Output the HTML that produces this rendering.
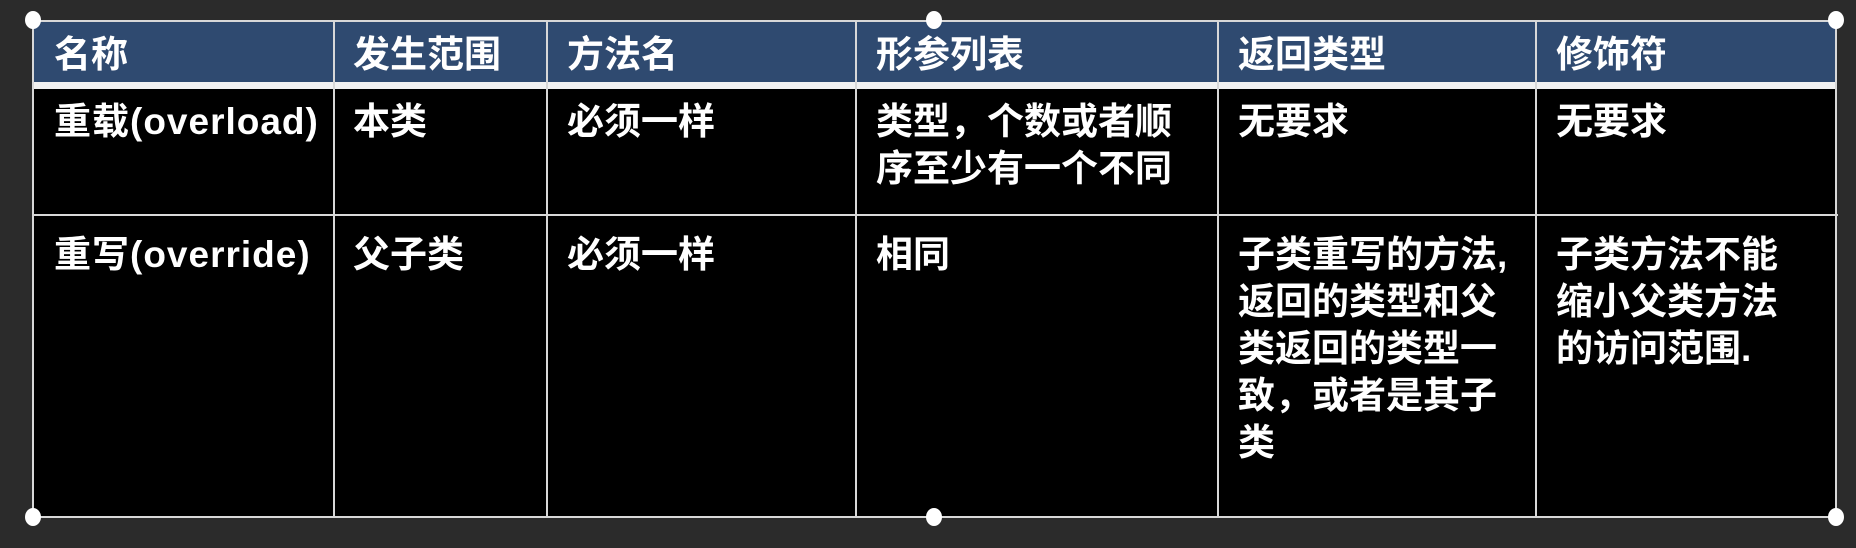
<!DOCTYPE html>
<html><head><meta charset="utf-8"><style>
body{margin:0;width:1856px;height:548px;background:#2b2b2b;overflow:hidden;position:relative;font-family:"Liberation Sans","Noto Sans CJK SC",sans-serif;font-weight:bold;color:#fff}
.hdr{position:absolute;left:33px;top:22px;width:1803px;height:61px;background:#2f4a70}
.body{position:absolute;left:33px;top:89px;width:1803px;height:428px;background:#000}
.wl{position:absolute;left:33px;top:82px;width:1803px;height:7px;background:#f2f2f2}
.v{position:absolute;width:2px;background:#d8d8d8;top:20px;height:498px}
.h{position:absolute;height:2px;background:#d8d8d8;left:33px;width:1805px}
.t{position:absolute;font-size:37px;line-height:47px;white-space:nowrap}
.d{position:absolute;width:16px;height:18px;border-radius:50%;background:#fff;margin:-9px 0 0 -8px}
</style></head><body>
<div class="hdr"></div><div class="body"></div><div class="wl"></div>
<div class="h" style="top:20px"></div>
<div class="h" style="top:214px"></div>
<div class="h" style="top:516px"></div>
<div class="v" style="left:32px"></div>
<div class="v" style="left:333px"></div>
<div class="v" style="left:546px"></div>
<div class="v" style="left:855px"></div>
<div class="v" style="left:1217px"></div>
<div class="v" style="left:1535px"></div>
<div class="v" style="left:1835px"></div>
<div class="t" style="left:54px;top:31px">名称</div>
<div class="t" style="left:353px;top:31px">发生范围</div>
<div class="t" style="left:567px;top:31px">方法名</div>
<div class="t" style="left:876px;top:31px">形参列表</div>
<div class="t" style="left:1238px;top:31px">返回类型</div>
<div class="t" style="left:1556px;top:31px">修饰符</div>
<div class="t" style="left:54px;top:98px;letter-spacing:1px">重载(overload)</div>
<div class="t" style="left:353px;top:98px">本类</div>
<div class="t" style="left:567px;top:98px">必须一样</div>
<div class="t" style="left:876px;top:98px">类型，个数或者顺<br>序至少有一个不同</div>
<div class="t" style="left:1238px;top:98px">无要求</div>
<div class="t" style="left:1556px;top:98px">无要求</div>
<div class="t" style="left:54px;top:231px;letter-spacing:1px">重写(override)</div>
<div class="t" style="left:353px;top:231px">父子类</div>
<div class="t" style="left:567px;top:231px">必须一样</div>
<div class="t" style="left:876px;top:231px">相同</div>
<div class="t" style="left:1238px;top:231px">子类重写的方法,<br>返回的类型和父<br>类返回的类型一<br>致，或者是其子<br>类</div>
<div class="t" style="left:1556px;top:231px">子类方法不能<br>缩小父类方法<br>的访问范围.</div>
<div class="d" style="left:33px;top:20px"></div>
<div class="d" style="left:934px;top:20px"></div>
<div class="d" style="left:1836px;top:20px"></div>
<div class="d" style="left:33px;top:517px"></div>
<div class="d" style="left:934px;top:517px"></div>
<div class="d" style="left:1836px;top:517px"></div>
</body></html>
